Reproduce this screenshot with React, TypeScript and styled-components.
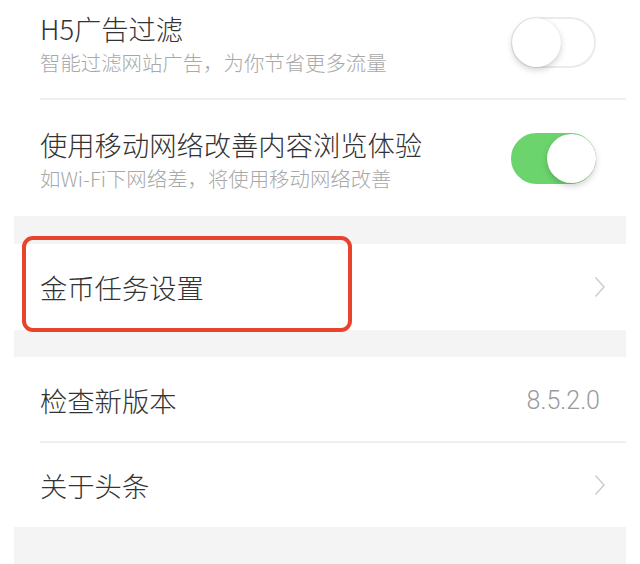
import React from "react";
import styled, { createGlobalStyle } from "styled-components";

const GlobalStyle = createGlobalStyle`
  html, body {
    margin: 0;
    padding: 0;
    background: #ffffff;
    font-family: "Noto Sans CJK SC", "Noto Sans", "Liberation Sans", sans-serif;
    overflow: hidden;
  }
`;

const Page = styled.div`
  width: 640px;
  height: 564px;
  overflow: hidden;
  background: #ffffff;
`;

const List = styled.div`
  margin: 0 14px;
  display: flex;
  flex-direction: column;
`;

const Gap = styled.div<{ $h: number }>`
  height: ${(p) => p.$h}px;
  background: #f4f4f4;
`;

const Row = styled.div<{ $h: number; $divider?: boolean; $shift?: number }>`
  position: relative;
  height: ${(p) => p.$h}px;
  margin-top: ${(p) => p.$shift ?? 0}px;
  display: flex;
  align-items: center;
  padding: 0 0 0 26px;
  background: #ffffff;
  box-sizing: border-box;
  &::after {
    content: "";
    display: ${(p) => (p.$divider ? "block" : "none")};
    position: absolute;
    left: 26px;
    right: 0;
    bottom: 0;
    height: 2px;
    background: #efefef;
  }
`;

const TextCol = styled.div`
  flex: 1;
  display: flex;
  flex-direction: column;
  gap: 4px;
  padding-top: 2px;
`;

const Title = styled.div`
  flex: 1;
  font-size: 27.3px;
  font-weight: 300;
  line-height: 34px;
  color: #333333;
`;

const Sub = styled.div`
  font-size: 20.4px;
  font-weight: 300;
  line-height: 26px;
  color: #a8a8a8;
`;

const Value = styled.div`
  font-family: "Roboto", "Liberation Sans", sans-serif;
  font-weight: 300;
  font-size: 25px;
  color: #9a9a9a;
  margin-right: 26px;
`;

const Switch = styled.div<{ $on: boolean }>`
  position: relative;
  width: 85px;
  height: 51px;
  margin-right: 30px;
  border-radius: 26px;
  box-sizing: border-box;
  background: ${(p) => (p.$on ? "#6bd46d" : "#ffffff")};
  border: 2px solid ${(p) => (p.$on ? "#6bd46d" : "#ebebeb")};
`;

const Knob = styled.div<{ $on: boolean }>`
  position: absolute;
  top: -1px;
  left: ${(p) => (p.$on ? "34px" : "-1px")};
  width: 49px;
  height: 49px;
  border-radius: 50%;
  background: #ffffff;
  box-shadow: 0 3px 6px rgba(0, 0, 0, 0.18), 0 0 1px rgba(0, 0, 0, 0.15);
`;

const Chevron = styled.svg`
  margin-right: 20px;
`;

const Mark = styled.div`
  position: absolute;
  left: 8px;
  top: -8px;
  width: 330px;
  height: 96px;
  border: 4px solid #e9432c;
  border-radius: 11px;
  box-sizing: border-box;
  pointer-events: none;
`;

function Arrow() {
  return (
    <Chevron width="12" height="22" viewBox="0 0 12 22">
      <path d="M1.5 1.5 L10 11 L1.5 20.5" fill="none" stroke="#cfcfcf" strokeWidth="1.6" />
    </Chevron>
  );
}

export default function App() {
  return (
    <Page>
      <GlobalStyle />
      <List>
        <Row $h={116} $shift={-16} $divider>
          <TextCol>
            <Title>H5广告过滤</Title>
            <Sub>智能过滤网站广告，为你节省更多流量</Sub>
          </TextCol>
          <Switch $on={false}>
            <Knob $on={false} />
          </Switch>
        </Row>
        <Row $h={116}>
          <TextCol>
            <Title>使用移动网络改善内容浏览体验</Title>
            <Sub>如Wi-Fi下网络差，将使用移动网络改善</Sub>
          </TextCol>
          <Switch $on>
            <Knob $on />
          </Switch>
        </Row>
        <Gap $h={28} />
        <Row $h={86}>
          <Title>金币任务设置</Title>
          <Arrow />
          <Mark />
        </Row>
        <Gap $h={27} />
        <Row $h={86} $divider>
          <Title>检查新版本</Title>
          <Value>8.5.2.0</Value>
        </Row>
        <Row $h={84}>
          <Title>关于头条</Title>
          <Arrow />
        </Row>
        <Gap $h={60} />
      </List>
    </Page>
  );
}
